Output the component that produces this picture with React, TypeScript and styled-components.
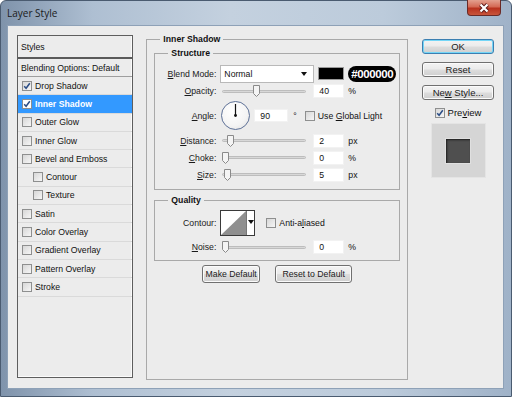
import styled, { createGlobalStyle } from "styled-components";

const GlobalStyle = createGlobalStyle`
  html, body {
    margin: 0;
    padding: 0;
  }
  body {
    width: 512px;
    height: 397px;
    overflow: hidden;
    font-family: "Liberation Sans", Arial, sans-serif;
    font-size: 8.7px;
    color: #111;
  }
  * { box-sizing: border-box; }
`;

const layerStyles = [
  { label: "Drop Shadow", checked: true },
  { label: "Inner Shadow", checked: true, selected: true },
  { label: "Outer Glow" },
  { label: "Inner Glow" },
  { label: "Bevel and Emboss" },
  { label: "Contour", indent: true },
  { label: "Texture", indent: true },
  { label: "Satin" },
  { label: "Color Overlay" },
  { label: "Gradient Overlay" },
  { label: "Pattern Overlay" },
  { label: "Stroke" },
];

// value / max drives the thumb position
const sliders = [
  { key: "D", rest: "istance:", value: "2", max: 30, unit: "px" },
  { key: "C", rest: "hoke:", value: "0", max: 100, unit: "%" },
  { key: "S", rest: "ize:", value: "5", max: 250, unit: "px" },
];

const Check = ({ checked, light }: { checked?: boolean; light?: boolean }) => (
  <CheckBox $light={light}>
    {checked && (
      <svg width="8" height="8" viewBox="0 0 8 8">
        <path d="M1.2 4.2 L3.1 6.3 L6.8 1.2" fill="none" stroke="#2b4d86" strokeWidth="1.5" />
      </svg>
    )}
  </CheckBox>
);

const Slider = ({ ratio }: { ratio: number }) => (
  <SliderBox>
    <Track />
    <Thumb style={{ left: `${2 + Math.round(ratio * 78)}px` }}>
      <svg width="7" height="12" viewBox="0 0 7 12">
        <path d="M0.5 0.5 H6.5 V8.5 L3.5 11.5 L0.5 8.5 Z" fill="#f4f4f4" stroke="#8a8a8a" />
      </svg>
    </Thumb>
  </SliderBox>
);

const App = () => {
  return (
    <>
      <GlobalStyle />
      <Window>
        <TitleBar>
          <Title>Layer Style</Title>
          <CloseButton>
            <svg width="14" height="10" viewBox="0 0 14 10">
              <path d="M3.5 1.5 L10.5 8.5 M10.5 1.5 L3.5 8.5" stroke="#5b1a1a" strokeWidth="4" />
              <path d="M3.5 1.5 L10.5 8.5 M10.5 1.5 L3.5 8.5" stroke="#fff" strokeWidth="2.2" />
            </svg>
          </CloseButton>
        </TitleBar>
        <Client>
          <StylesPanel>
            <StylesHeader>Styles</StylesHeader>
            <BlendingRow>Blending Options: Default</BlendingRow>
            {layerStyles.map((s) => (
              <StyleRow key={s.label} $selected={s.selected} $indent={s.indent}>
                <Check checked={s.checked} light={s.selected} />
                <span>{s.label}</span>
              </StyleRow>
            ))}
          </StylesPanel>

          <MainGroup>
            <Legend $offset={6}>Inner Shadow</Legend>
            <SubGroup>
              <Legend $offset={13}>Structure</Legend>
              <Row $h={19}>
                <Label><u>B</u>lend Mode:</Label>
                <Select>
                  <span>Normal</span>
                  <Arrow />
                </Select>
                <Swatch />
                <HexTag>#000000</HexTag>
              </Row>
              <Row $h={16}>
                <Label><u>O</u>pacity:</Label>
                <Slider ratio={0.4} />
                <NumInput>40</NumInput>
                <Unit>%</Unit>
              </Row>
              <Row $h={33}>
                <Label><u>A</u>ngle:</Label>
                <Dial>
                  <svg width="29" height="29" viewBox="0 0 29 29">
                    <line x1="14.5" y1="14.5" x2="14.5" y2="3" stroke="#111" strokeWidth="1.2" />
                    <circle cx="14.5" cy="14.5" r="1.4" fill="#111" />
                  </svg>
                </Dial>
                <AngleInput>90</AngleInput>
                <Degree>°</Degree>
                <Check />
                <CheckLabel>Use <u>G</u>lobal Light</CheckLabel>
              </Row>
              {sliders.map((s) => (
                <Row $h={17} key={s.key}>
                  <Label><u>{s.key}</u>{s.rest}</Label>
                  <Slider ratio={Number(s.value) / s.max} />
                  <NumInput>{s.value}</NumInput>
                  <Unit>{s.unit}</Unit>
                </Row>
              ))}
            </SubGroup>

            <QualityGroup>
              <Legend $offset={13}>Quality</Legend>
              <Row $h={26}>
                <Label>Contour:</Label>
                <ContourBox>
                  <ContourGraph>
                    <svg width="25" height="24" viewBox="0 0 25 24" preserveAspectRatio="none">
                      <polygon points="0,24 25,0 25,24" fill="#8f8f8f" />
                    </svg>
                  </ContourGraph>
                  <ContourDrop>
                    <Arrow />
                  </ContourDrop>
                </ContourBox>
                <AntiAlias>
                  <Check />
                  <CheckLabel>Anti-a<u>l</u>iased</CheckLabel>
                </AntiAlias>
              </Row>
              <NoiseRow $h={16}>
                <Label><u>N</u>oise:</Label>
                <Slider ratio={0} />
                <NumInput>0</NumInput>
                <Unit>%</Unit>
              </NoiseRow>
            </QualityGroup>

            <ButtonRow>
              <Button $w={58}>Make Default</Button>
              <Button $w={77}>Reset to Default</Button>
            </ButtonRow>
          </MainGroup>

          <SideColumn>
            <Button $w={72} $h={15} $focused>OK</Button>
            <Button $w={72} $h={15}>Reset</Button>
            <Button $w={72} $h={15}>
              <span>Ne<u>w</u> Style...</span>
            </Button>
            <PreviewToggle>
              <Check checked />
              <PreviewText>Pre<u>v</u>iew</PreviewText>
            </PreviewToggle>
            <PreviewBox>
              <PreviewSwatch />
            </PreviewBox>
          </SideColumn>
        </Client>
      </Window>
    </>
  );
};
export default App;

const Window = styled.div`
  width: 512px;
  height: 397px;
  display: flex;
  flex-direction: column;
  border: 1px solid #4a5b70;
  border-radius: 6px 6px 0 0;
  background: linear-gradient(90deg, #7f93ab 0%, #aebfd2 18%, #c4d1df 45%, #bccbdb 75%, #9fb2c8 100%);
`;

const TitleBar = styled.div`
  height: 24px;
  display: flex;
  justify-content: space-between;
  align-items: flex-start;
  padding-left: 6px;
`;

const Title = styled.div`
  font-family: "Open Sans", "Liberation Sans", sans-serif;
  font-size: 10px;
  line-height: 24px;
  color: #1b1b1b;
`;

const CloseButton = styled.div`
  width: 34px;
  height: 16px;
  margin-right: 10px;
  margin-top: -1px;
  display: flex;
  align-items: center;
  justify-content: center;
  border: 1px solid #6a2a26;
  border-top: none;
  border-radius: 0 0 4px 4px;
  background: linear-gradient(#e3a08f 0%, #d46a55 45%, #b8321e 55%, #c8553b 100%);
`;

const Client = styled.div`
  flex: 1;
  display: flex;
  margin: 0 7px 7px 6px;
  padding: 7px 9px 8px 9px;
  background: #ececec;
  border: 1px solid #8ea1b7;
`;

const StylesPanel = styled.div`
  width: 117px;
  margin: 2px 13px 2px 0;
  border: 1px solid #5e5e5e;
  box-shadow: inset -1px -1px 0 #fbfbfb;
  background: #ececec;
  display: flex;
  flex-direction: column;
`;

const StylesHeader = styled.div`
  height: 23px;
  padding-left: 3px;
  display: flex;
  align-items: center;
  border-bottom: 2px solid #5a5a5a;
`;

const BlendingRow = styled.div`
  height: 18px;
  padding-left: 3px;
  display: flex;
  align-items: center;
  border-bottom: 1px solid #9e9e9e;
`;

const StyleRow = styled.div<{ $selected?: boolean; $indent?: boolean }>`
  height: 18.3px;
  display: flex;
  align-items: center;
  gap: 3px;
  padding-left: ${({ $indent }) => ($indent ? "15px" : "4px")};
  border-bottom: 1px solid #dadada;
  background: ${({ $selected }) => ($selected ? "#3399ff" : "transparent")};
  color: ${({ $selected }) => ($selected ? "#fff" : "#111")};
  font-weight: ${({ $selected }) => ($selected ? "bold" : "normal")};
`;

const CheckBox = styled.span<{ $light?: boolean }>`
  width: 10px;
  height: 10px;
  flex: none;
  display: inline-flex;
  align-items: center;
  justify-content: center;
  border: 1px solid #8e8f8f;
  background: ${({ $light }) =>
    $light ? "#fff" : "linear-gradient(135deg, #d7d7d7 0%, #f6f6f6 100%)"};
`;

const MainGroup = styled.fieldset`
  width: 263px;
  min-width: 0;
  margin: 0 14px 0 0;
  padding: 2px 7px 0 7px;
  border: 1px solid #a9a9a9;
  display: flex;
  flex-direction: column;
`;

const Legend = styled.legend<{ $offset: number }>`
  font-weight: bold;
  line-height: 12px;
  padding: 0 3px;
  margin-left: ${({ $offset }) => $offset}px;
`;

const SubGroup = styled.fieldset`
  min-width: 0;
  margin: 0;
  padding: 5px 0 6px 0;
  border: 1px solid #a9a9a9;
  display: flex;
  flex-direction: column;
`;

const QualityGroup = styled(SubGroup)`
  margin-top: 4px;
  padding: 4px 0 5px 0;
`;

const Row = styled.div<{ $h: number }>`
  height: ${({ $h }) => $h}px;
  display: flex;
  align-items: center;
`;

const NoiseRow = styled(Row)`
  margin-top: 3px;
`;

const Label = styled.span`
  width: 61px;
  flex: none;
  text-align: right;
  color: #1a1a1a;
  u { text-underline-offset: 1px; }
`;

const Select = styled.div`
  width: 94px;
  height: 18px;
  margin-left: 4px;
  padding: 0 6px 0 3px;
  display: flex;
  align-items: center;
  justify-content: space-between;
  background: #fff;
  border: 1px solid #b9b9b9;
`;

const Arrow = styled.span`
  width: 0;
  height: 0;
  border-left: 3px solid transparent;
  border-right: 3px solid transparent;
  border-top: 4px solid #111;
`;

const Swatch = styled.div`
  width: 26px;
  height: 13px;
  margin-left: 4px;
  background: #000;
  border: 1px solid #9a9a9a;
`;

const HexTag = styled.span`
  margin-left: 4px;
  padding: 0 3px;
  height: 16px;
  line-height: 16px;
  border-radius: 8px;
  background: #000;
  color: #fff;
  font-weight: bold;
  font-size: 11.5px;
  letter-spacing: -0.4px;
`;

const SliderBox = styled.div`
  position: relative;
  width: 88px;
  height: 14px;
  margin-left: 4px;
  display: flex;
  align-items: center;
`;

const Track = styled.div`
  flex: 1;
  height: 3px;
  margin: 0 2px;
  border-radius: 2px;
  background: #d8d8d8;
  border: 1px solid #bdbdbd;
`;

const Thumb = styled.div`
  position: absolute;
  top: 1px;
  width: 7px;
  height: 12px;
  display: flex;
`;

const NumInput = styled.div`
  width: 31px;
  height: 14px;
  margin-left: 5px;
  padding-left: 5px;
  display: flex;
  align-items: center;
  background: #fff;
  border: 1px solid #f2f2f2;
`;

const AngleInput = styled(NumInput)`
  width: 34px;
  height: 13px;
  margin-left: 4px;
`;

const Unit = styled.span`
  margin-left: 4px;
`;

const Degree = styled.span`
  margin: 0 8px 0 5px;
`;

const CheckLabel = styled.span`
  margin-left: 3px;
`;

const Dial = styled.div`
  width: 29px;
  height: 29px;
  margin-left: 5px;
  border-radius: 50%;
  border: 1.5px solid #5e7197;
  background: radial-gradient(circle at 40% 35%, #ffffff 0%, #f4f4f4 60%, #dcdcdc 100%);
  display: flex;
  align-items: center;
  justify-content: center;
  svg { margin: -1.5px; }
`;

const ContourBox = styled.div`
  width: 35px;
  height: 26px;
  margin-left: 4px;
  display: flex;
  border: 1px solid #3a3a3a;
  background: #fff;
`;

const ContourGraph = styled.div`
  flex: 1;
  display: flex;
  border-right: 1px solid #777;
`;

const ContourDrop = styled.div`
  width: 8px;
  display: flex;
  align-items: center;
  justify-content: center;
  padding-bottom: 2px;
`;

const AntiAlias = styled.div`
  margin-left: 11px;
  display: flex;
  align-items: center;
`;

const ButtonRow = styled.div`
  margin-top: 4px;
  display: flex;
  justify-content: center;
  gap: 15px;
`;

const Button = styled.div<{ $w: number; $h?: number; $focused?: boolean }>`
  width: ${({ $w }) => $w}px;
  height: ${({ $h }) => $h ?? 18}px;
  display: flex;
  align-items: center;
  justify-content: center;
  font-size: ${({ $h }) => ($h ? "9.5px" : "8.7px")};
  color: #1a1a1a;
  border-radius: 3px;
  border: 1px solid ${({ $focused }) => ($focused ? "#3c7fb1" : "#707070")};
  box-shadow: ${({ $focused }) =>
    $focused ? "inset 0 0 0 1px #74d6f7" : "inset 0 0 0 1px #fbfbfb"};
  background: linear-gradient(#f3f3f3 0%, #ebebeb 48%, #dddddd 52%, #cfcfcf 100%);
`;

const SideColumn = styled.div`
  width: 72px;
  margin-top: 6px;
  display: flex;
  flex-direction: column;
  align-items: center;
  gap: 8px;
`;

const PreviewToggle = styled.div`
  margin-top: -1px;
  display: flex;
  align-items: center;
  gap: 3px;
  font-size: 9.5px;
`;

const PreviewText = styled.span`
  font-size: 9.5px;
`;

const PreviewBox = styled.div`
  width: 55px;
  height: 55px;
  margin-top: -3px;
  display: flex;
  align-items: center;
  justify-content: center;
  background: #d5d5d5;
  border: 1px solid #e4e4e4;
`;

const PreviewSwatch = styled.div`
  width: 26px;
  height: 26px;
  background: #4f4f4f;
  border: 1px solid #e0e0e0;
  box-shadow: inset 1px 1px 2px #1e1e1e;
`;
